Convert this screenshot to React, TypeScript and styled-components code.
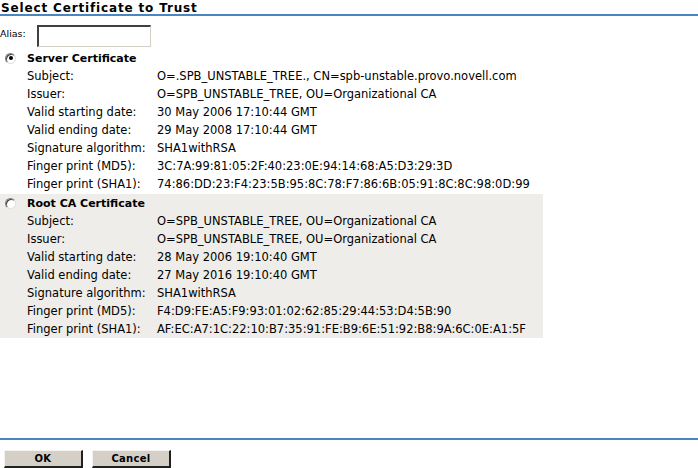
import React, { useState } from 'react';
import styled, { createGlobalStyle } from 'styled-components';

/* -------------------------------------------------------------------------- */
/* Data                                                                       */
/* -------------------------------------------------------------------------- */

interface Certificate {
  id: string;
  title: string;
  fields: [string, string][];
}

const certificates: Certificate[] = [
  {
    id: 'server',
    title: 'Server Certificate',
    fields: [
      ['Subject:', 'O=.SPB_UNSTABLE_TREE., CN=spb-unstable.provo.novell.com'],
      ['Issuer:', 'O=SPB_UNSTABLE_TREE, OU=Organizational CA'],
      ['Valid starting date:', '30 May 2006 17:10:44 GMT'],
      ['Valid ending date:', '29 May 2008 17:10:44 GMT'],
      ['Signature algorithm:', 'SHA1withRSA'],
      ['Finger print (MD5):', '3C:7A:99:81:05:2F:40:23:0E:94:14:68:A5:D3:29:3D'],
      ['Finger print (SHA1):', '74:86:DD:23:F4:23:5B:95:8C:78:F7:86:6B:05:91:8C:8C:98:0D:99'],
    ],
  },
  {
    id: 'root',
    title: 'Root CA Certificate',
    fields: [
      ['Subject:', 'O=SPB_UNSTABLE_TREE, OU=Organizational CA'],
      ['Issuer:', 'O=SPB_UNSTABLE_TREE, OU=Organizational CA'],
      ['Valid starting date:', '28 May 2006 19:10:40 GMT'],
      ['Valid ending date:', '27 May 2016 19:10:40 GMT'],
      ['Signature algorithm:', 'SHA1withRSA'],
      ['Finger print (MD5):', 'F4:D9:FE:A5:F9:93:01:02:62:85:29:44:53:D4:5B:90'],
      ['Finger print (SHA1):', 'AF:EC:A7:1C:22:10:B7:35:91:FE:B9:6E:51:92:B8:9A:6C:0E:A1:5F'],
    ],
  },
];

/* -------------------------------------------------------------------------- */
/* Styled Components                                                          */
/* -------------------------------------------------------------------------- */

const GlobalStyle = createGlobalStyle`
  html, body {
    margin: 0;
    padding: 0;
    background: #fff;
  }
  body {
    font-family: "DejaVu Sans", Verdana, sans-serif;
    font-size: 11.5px;
    color: #000;
  }
`;

const Page = styled.div`
  width: 698px;
  height: 468px;
  display: flex;
  flex-direction: column;
`;

const Header = styled.h1`
  margin: 0;
  height: 12px;
  padding: 2px 0 0 1px;
  font-size: 12px;
  line-height: 12px;
  font-weight: bold;
  letter-spacing: 0.85px;
  border-bottom: 2px solid #4a86bf;
`;

const AliasRow = styled.div`
  display: flex;
  align-items: center;
  gap: 11px;
  height: 23px;
  padding-top: 8px;
`;

const AliasLabel = styled.label`
  font-size: 9.5px;
  line-height: 10px;
  padding-bottom: 4px;
`;

const AliasInput = styled.input`
  box-sizing: border-box;
  width: 114px;
  height: 22px;
  margin: 0;
  padding: 0 3px;
  border-style: solid;
  border-width: 2px 1px 1px 2px;
  border-color: #404040 #d4d0c8 #d4d0c8 #404040;
  background: #fff;
  font: inherit;
`;

const CertTable = styled.div<{ $shaded: boolean }>`
  width: 543px;
  background: ${(p) => (p.$shaded ? '#eeede9' : 'transparent')};
  margin-top: ${(p) => (p.$shaded ? '1px' : '2px')};
`;

const CertHeading = styled.label`
  display: flex;
  align-items: center;
  height: 18px;
  font-size: 11px;
  font-weight: bold;
  cursor: pointer;
`;

const Radio = styled.span<{ $checked: boolean }>`
  box-sizing: border-box;
  width: 11px;
  height: 11px;
  margin: 0 11px 0 5px;
  border-radius: 50%;
  border: 1px solid;
  border-color: #808080 #e4e2dc #e4e2dc #808080;
  background: #fff;
  box-shadow: inset 1px 1px 0 #404040;
  display: flex;
  align-items: center;
  justify-content: center;

  &::after {
    content: '';
    width: 4px;
    height: 4px;
    border-radius: 50%;
    background: ${(p) => (p.$checked ? '#000' : 'transparent')};
  }
`;

const FieldRow = styled.div`
  display: grid;
  grid-template-columns: 130px 1fr;
  height: 18px;
  align-items: center;
  padding-left: 27px;
  white-space: nowrap;
`;

const Spacer = styled.div`
  flex: 1;
`;

const Footer = styled.div`
  border-top: 2px solid #4a86bf;
  height: 28px;
  display: flex;
  align-items: center;
  gap: 9px;
  padding: 0 0 0 4px;
`;

const Button = styled.button`
  box-sizing: border-box;
  width: 79px;
  height: 18px;
  margin-top: 10px;
  padding: 0;
  background: #d4d0c8;
  border-style: solid;
  border-width: 1px 2px 2px 1px;
  border-color: #f4f2ee #202020 #202020 #f4f2ee;
  font-family: "DejaVu Sans", Verdana, sans-serif;
  font-size: 10px;
  font-weight: bold;
  letter-spacing: 0.3px;
  color: #000;
  cursor: pointer;
`;

/* -------------------------------------------------------------------------- */
/* Component                                                                  */
/* -------------------------------------------------------------------------- */

export default function App() {
  const [selected, setSelected] = useState('server');

  return (
    <Page>
      <GlobalStyle />
      <Header>Select Certificate to Trust</Header>

      <AliasRow>
        <AliasLabel htmlFor="alias">Alias:</AliasLabel>
        <AliasInput id="alias" type="text" />
      </AliasRow>

      {certificates.map((cert) => (
        <CertTable key={cert.id} $shaded={cert.id === 'root'}>
          <CertHeading onClick={() => setSelected(cert.id)}>
            <Radio $checked={selected === cert.id} />
            {cert.title}
          </CertHeading>
          {cert.fields.map(([label, value]) => (
            <FieldRow key={label}>
              <span>{label}</span>
              <span>{value}</span>
            </FieldRow>
          ))}
        </CertTable>
      ))}

      <Spacer />

      <Footer>
        <Button>OK</Button>
        <Button>Cancel</Button>
      </Footer>
    </Page>
  );
}
